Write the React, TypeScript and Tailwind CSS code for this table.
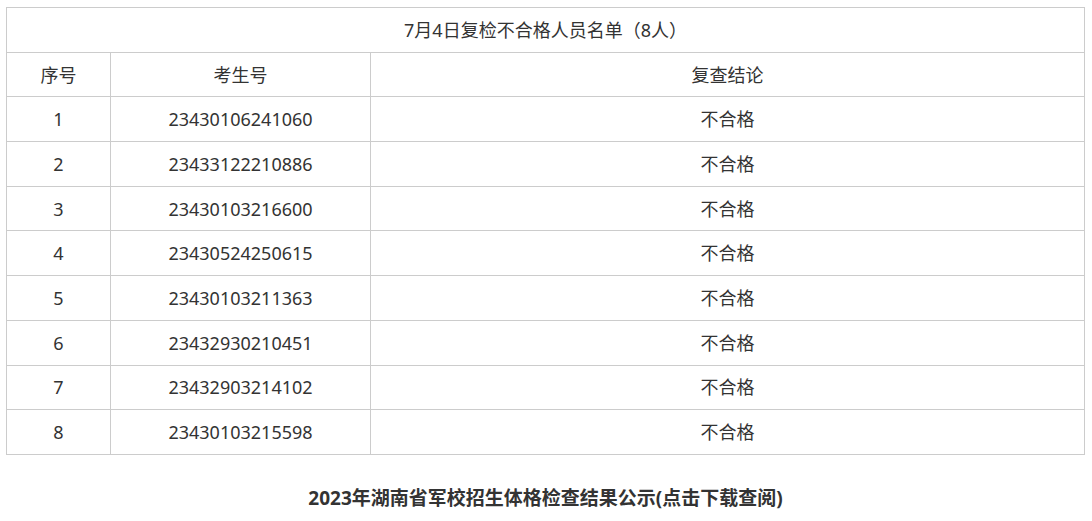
const rows = [
  ["1", "23430106241060"],
  ["2", "23433122210886"],
  ["3", "23430103216600"],
  ["4", "23430524250615"],
  ["5", "23430103211363"],
  ["6", "23432930210451"],
  ["7", "23432903214102"],
  ["8", "23430103215598"],
];

const cell = "border border-[#cccccc] h-[44.7px] p-0 text-center align-middle";

export default function App() {
  return (
    <div className="bg-white text-[#333333] pl-[6px] pr-[7px] pt-[7px] font-['Noto_Sans','Noto_Sans_CJK_SC',sans-serif]">
      <table className="w-full border-collapse text-[18px] leading-[24px] table-fixed">
        <colgroup>
          <col className="w-[104px]" />
          <col className="w-[260px]" />
          <col />
        </colgroup>
        <tbody>
          <tr>
            <td colSpan={3} className={cell}>
              7月4日复检不合格人员名单（8人）
            </td>
          </tr>
          <tr>
            <td className={cell}>序号</td>
            <td className={cell}>考生号</td>
            <td className={cell}>复查结论</td>
          </tr>
          {rows.map(([no, id]) => (
            <tr key={no}>
              <td className={cell}>{no}</td>
              <td className={cell}>{id}</td>
              <td className={cell}>不合格</td>
            </tr>
          ))}
        </tbody>
      </table>
      <p className="mt-[30px] text-center text-[19px] leading-[26px] font-bold">
        2023年湖南省军校招生体格检查结果公示(点击下载查阅)
      </p>
    </div>
  );
}
